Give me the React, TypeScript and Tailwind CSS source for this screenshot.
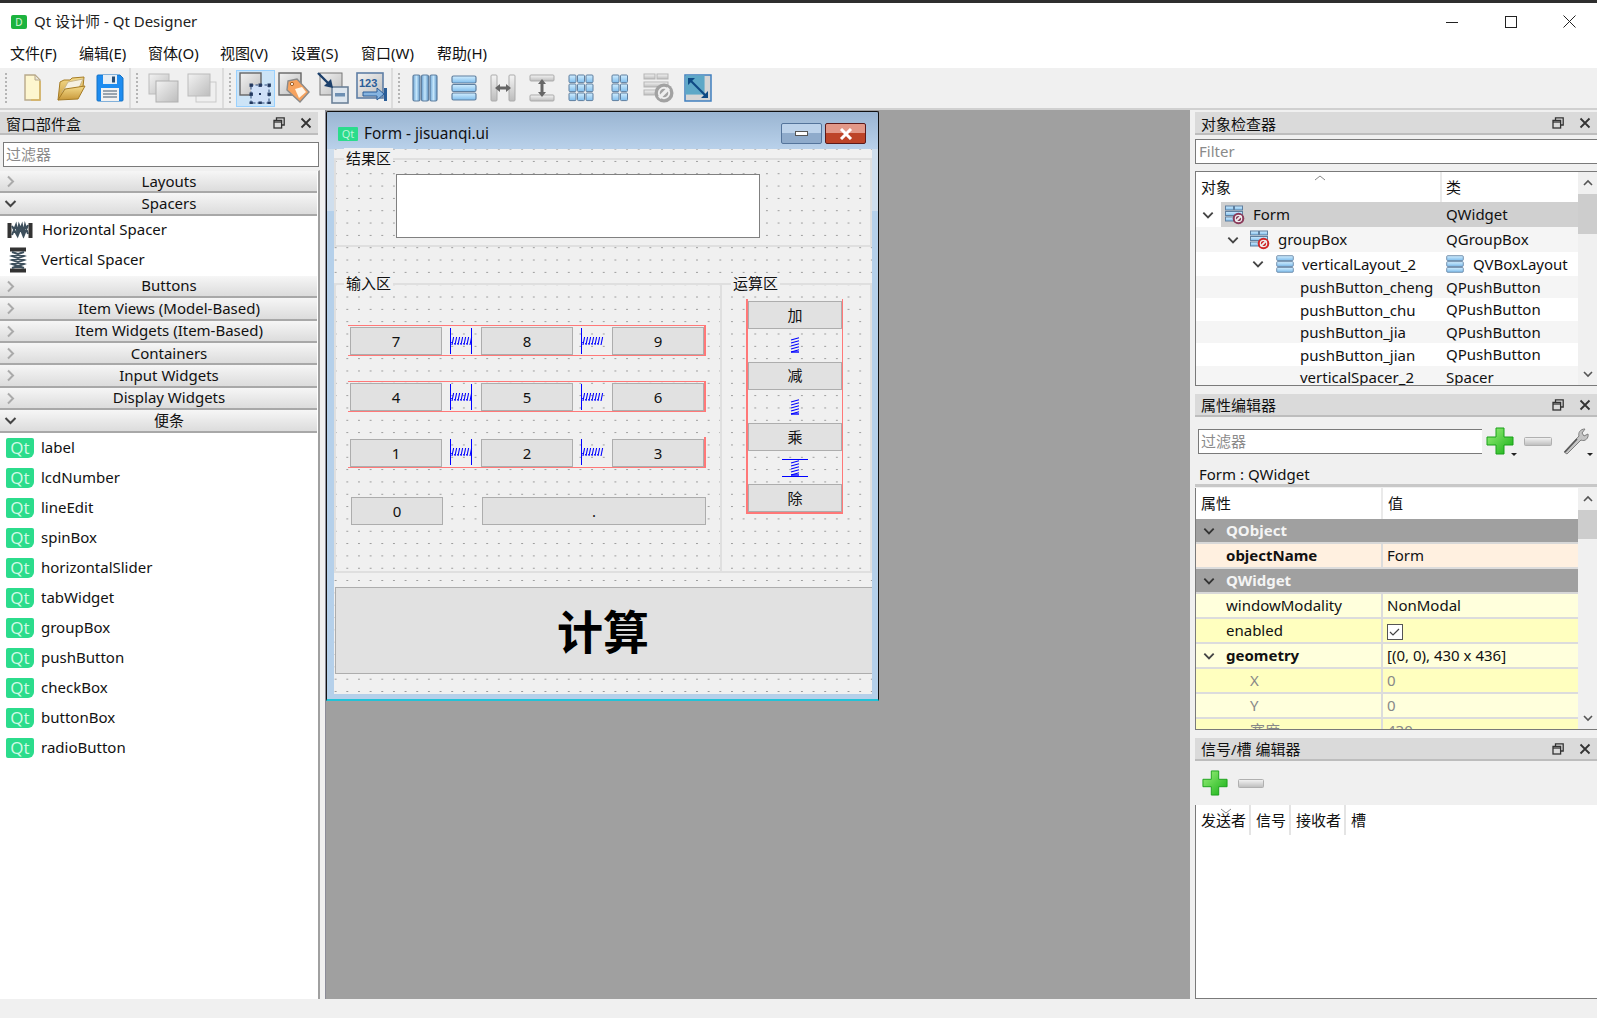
import React from "react";

const FONT = "font-['Noto_Sans','Noto_Sans_CJK_SC',sans-serif]";

function Defs() {
  return (
    <svg className="absolute w-0 h-0">
      <defs>
        <linearGradient id="gbox" x1="0" y1="0" x2="1" y2="1">
          <stop offset="0" stopColor="#f2f2f2" />
          <stop offset="1" stopColor="#bdbdbd" />
        </linearGradient>
        <linearGradient id="blueV" x1="0" y1="0" x2="1" y2="0">
          <stop offset="0" stopColor="#6fa6d6" />
          <stop offset="0.5" stopColor="#c4e6fb" />
          <stop offset="1" stopColor="#5f96c8" />
        </linearGradient>
        <linearGradient id="blueH" x1="0" y1="0" x2="0" y2="1">
          <stop offset="0" stopColor="#d2eeff" />
          <stop offset="1" stopColor="#7fbdec" />
        </linearGradient>
        <linearGradient id="grayBar" x1="0" y1="0" x2="0" y2="1">
          <stop offset="0" stopColor="#f4f4f4" />
          <stop offset="1" stopColor="#bcbcbc" />
        </linearGradient>
        <linearGradient id="greenP" x1="0" y1="0" x2="1" y2="1">
          <stop offset="0" stopColor="#9cf07c" />
          <stop offset="1" stopColor="#14b014" />
        </linearGradient>
        <linearGradient id="folder" x1="0" y1="0" x2="0" y2="1">
          <stop offset="0" stopColor="#f5dc8c" />
          <stop offset="1" stopColor="#c8983a" />
        </linearGradient>
      </defs>
    </svg>
  );
}

function Chevron({ open, color = "#444", size = 14, className = "" }: { open?: boolean; color?: string; size?: number; className?: string }) {
  return (
    <svg width={size} height={size} viewBox="0 0 12 12" className={className} fill="none" stroke={color} strokeWidth="1.6">
      {open ? <path d="M2 4l4 4 4-4" /> : <path d="M4 2l4 4-4 4" />}
    </svg>
  );
}

function DockButtons() {
  return (
    <div className="flex items-center">
      <svg width="12" height="12" viewBox="0 0 12 12" fill="none" stroke="#333" strokeWidth="1.3" className="mr-[15px]">
        <path d="M3.5 3V.8h7.7v7.2H9" />
        <rect x="1" y="3.4" width="7.6" height="7.6" />
        <path d="M1 5h7.6" />
      </svg>
      <svg width="12" height="12" viewBox="0 0 12 12" fill="none" stroke="#333" strokeWidth="1.8" className="mr-[6px]">
        <path d="M1.5 1.5l9 9M10.5 1.5l-9 9" />
      </svg>
    </div>
  );
}

function DockTitle({ title, textClass = "mt-[3px]" }: { title: string; textClass?: string }) {
  return (
    <div className="h-[23px] shrink-0 flex items-center justify-between pl-[6px] bg-[#dadada] border-b-2 border-[#bdbdbd] text-[15px] leading-none text-[#111]">
      <span className={textClass}>{title}</span>
      <DockButtons />
    </div>
  );
}

function NewIcon() {
  return (
    <svg width="30" height="30" viewBox="0 0 30 30">
      <path d="M8 2h10l5 5v20H8z" fill="#fdf6cf" stroke="#b8a98a" strokeWidth="1.4" />
      <path d="M18 2v5h5z" fill="#e8e4d8" stroke="#b8a98a" />
      <path d="M23 8v19H14" fill="none" stroke="#d9b45f" strokeWidth="1.4" />
    </svg>
  );
}

function OpenIcon() {
  return (
    <svg width="32" height="30" viewBox="0 0 32 30">
      <path d="M3 27L5 9l4-2h6l2-2 12-1-1 10z" fill="url(#folder)" stroke="#a67c25" />
      <path d="M7 20L13 9l15-3-5 11z" fill="#f6f1e2" stroke="#c9b78a" />
      <path d="M3 27l7-11 20-3-7 13z" fill="url(#folder)" stroke="#a67c25" />
    </svg>
  );
}

function SaveIcon() {
  return (
    <svg width="30" height="30" viewBox="0 0 30 30">
      <path d="M2 3a1 1 0 0 1 1-1h22l3 3v22a1 1 0 0 1-1 1H3a1 1 0 0 1-1-1z" fill="#1d8cf0" stroke="#1672c4" />
      <rect x="8" y="2" width="14" height="9" fill="#e6eef5" />
      <rect x="17" y="3.5" width="3" height="6" fill="#2b4e73" />
      <rect x="6" y="15" width="18" height="13" fill="#f2f2f2" />
      <path d="M8 18h14M8 21h14M8 24h14" stroke="#7c8b99" strokeWidth="1.3" />
    </svg>
  );
}

function CopyIcon({ flip }: { flip?: boolean }) {
  return (
    <svg width="32" height="32" viewBox="0 0 32 32">
      {flip ? (
        <>
          <rect x="10" y="10" width="20" height="20" fill="#efefef" stroke="#c9c9c9" />
          <rect x="2" y="2" width="22" height="22" fill="url(#gbox)" stroke="#bcbcbc" />
        </>
      ) : (
        <>
          <rect x="2" y="2" width="20" height="20" fill="url(#gbox)" stroke="#bcbcbc" />
          <rect x="9" y="9" width="22" height="21" fill="url(#gbox)" stroke="#b0b0b0" />
        </>
      )}
    </svg>
  );
}

function WidgetEditIcon() {
  return (
    <svg width="32" height="32" viewBox="0 0 32 32">
      <rect x="1" y="1" width="21" height="22" fill="url(#gbox)" stroke="#666" strokeWidth="1.4" />
      <rect x="12" y="13" width="18" height="18" fill="#cfe0f8" stroke="#2d4a7a" strokeDasharray="2.5 2" />
      {[[12, 13], [21, 13], [30, 13], [12, 22], [30, 22], [12, 31], [21, 31], [30, 31]].map(([x, y]) => (
        <rect key={`${x}-${y}`} x={x - 1.5} y={y - 1.5} width="3.4" height="3.4" fill="#22385f" />
      ))}
      <rect x="20" y="21" width="2" height="2" fill="#22385f" />
    </svg>
  );
}

function TagIcon() {
  return (
    <svg width="32" height="32" viewBox="0 0 32 32">
      <rect x="1" y="1" width="22" height="22" fill="url(#gbox)" stroke="#666" strokeWidth="1.4" />
      <path d="M10 9l9-2 12 13-9 10L9 18z" fill="#f6a25e" stroke="#8a8a8a" strokeWidth="1.4" />
      <path d="M17 17l7-2 4 5-7 6z" fill="#fff4e6" />
      <circle cx="14" cy="12" r="1.6" fill="#fff" stroke="#a05a20" />
    </svg>
  );
}

function BuddyIcon() {
  return (
    <svg width="32" height="32" viewBox="0 0 32 32">
      <rect x="3" y="1" width="22" height="22" fill="url(#gbox)" stroke="#777" />
      <rect x="15" y="15" width="16" height="16" fill="#dde6ef" stroke="#6d8299" strokeWidth="1.6" />
      <rect x="18" y="21" width="10" height="3.5" fill="#6d8fb3" />
      <path d="M1 1l12 12" stroke="#1b3f6b" strokeWidth="2.4" />
      <path d="M16 16l-9-2 7-7z" fill="#1b3f6b" />
    </svg>
  );
}

function TabOrderIcon() {
  return (
    <svg width="32" height="32" viewBox="0 0 32 32">
      <rect x="1" y="1" width="26" height="25" fill="url(#gbox)" stroke="#5f7fa6" strokeWidth="1.6" />
      <text x="3" y="15" fontSize="11" fill="#2a5d98" fontFamily="Liberation Sans" fontWeight="700">123</text>
      <path d="M7 20h14v-4l7 6-7 6v-4H7z" fill="#86b4e0" stroke="#2a5d98" />
      <rect x="28" y="16" width="3" height="13" fill="#2a5d98" />
    </svg>
  );
}

function HLayoutIcon() {
  return (
    <svg width="26" height="28" viewBox="0 0 26 28">
      {[1, 9.5, 18].map((x) => (
        <rect key={x} x={x} y="1" width="7" height="26" rx="1.5" fill="url(#blueV)" stroke="#5f7f9f" strokeWidth="1.2" />
      ))}
    </svg>
  );
}

function VLayoutIcon({ size = 26 }: { size?: number }) {
  return (
    <svg width={size} height={size} viewBox="0 0 26 26">
      {[1, 9.5, 18].map((y) => (
        <rect key={y} x="1" y={y} width="24" height="7" rx="1.5" fill="url(#blueH)" stroke="#5f7f9f" strokeWidth="1.2" />
      ))}
    </svg>
  );
}

function HSplitIcon() {
  return (
    <svg width="26" height="28" viewBox="0 0 26 28">
      <rect x="1" y="1" width="6" height="26" rx="1" fill="url(#grayBar)" stroke="#ababab" />
      <rect x="19" y="1" width="6" height="26" rx="1" fill="url(#grayBar)" stroke="#ababab" />
      <path d="M5 14l5-4v2.5h6V10l5 4-5 4v-2.5h-6V18z" fill="#666" />
    </svg>
  );
}

function VSplitIcon() {
  return (
    <svg width="26" height="28" viewBox="0 0 26 28">
      <rect x="1" y="1" width="24" height="6" rx="1" fill="url(#grayBar)" stroke="#ababab" />
      <rect x="1" y="21" width="24" height="6" rx="1" fill="url(#grayBar)" stroke="#ababab" />
      <path d="M13 5l4 5h-2.5v8H17l-4 5-4-5h2.5v-8H9z" fill="#666" />
    </svg>
  );
}

function GridIcon({ cols, size }: { cols: number; size: number }) {
  const cells = [];
  for (let r = 0; r < 3; r++)
    for (let c = 0; c < cols; c++)
      cells.push(<rect key={`${r}-${c}`} x={1 + c * 8.5} y={1 + r * 9} width="7" height="7.6" rx="1" fill="url(#blueH)" stroke="#5f7f9f" />);
  return (
    <svg width={size} height="28" viewBox={`0 0 ${size} 28`}>
      {cells}
    </svg>
  );
}

function NoSign({ cx, cy, r, color }: { cx: number; cy: number; r: number; color: string }) {
  return (
    <g>
      <circle cx={cx} cy={cy} r={r} fill={color} />
      <path d={`M${cx - r * 0.5} ${cy + r * 0.5}L${cx + r * 0.5} ${cy - r * 0.5}`} stroke="#eee" strokeWidth={r * 0.35} />
      <circle cx={cx} cy={cy} r={r * 0.55} fill="none" stroke="#eee" strokeWidth={r * 0.2} />
    </g>
  );
}

function BreakIcon() {
  return (
    <svg width="32" height="30" viewBox="0 0 32 30">
      <rect x="1" y="1" width="11" height="5" fill="url(#grayBar)" stroke="#b5b5b5" />
      <rect x="14" y="1" width="11" height="5" fill="url(#grayBar)" stroke="#b5b5b5" />
      <rect x="1" y="9" width="24" height="5" fill="url(#grayBar)" stroke="#b5b5b5" />
      <rect x="1" y="17" width="12" height="5" fill="url(#grayBar)" stroke="#b5b5b5" />
      <NoSign cx={21} cy={20} r={9.5} color="#a2a2a2" />
    </svg>
  );
}

function AdjustIcon() {
  return (
    <svg width="28" height="28" viewBox="0 0 28 28">
      <rect x="1" y="1" width="26" height="26" fill="#d6d6d6" stroke="#3f7fbf" strokeWidth="1.5" />
      <rect x="1.5" y="1.5" width="19" height="19" fill="#6fb6cf" />
      <rect x="1.5" y="1.5" width="19" height="19" fill="#3f8fb8" opacity="0.35" />
      <path d="M5 5l17 17" stroke="#0f4a84" strokeWidth="2.2" />
      <path d="M4 4h7l-7 7zM24 24h-7l7-7z" fill="#0f4a84" />
    </svg>
  );
}

function Plus({ size }: { size: number }) {
  return (
    <svg width={size} height={size} viewBox="0 0 28 28">
      <path d="M10 1h8v9h9v8h-9v9h-8v-9H1v-8h9z" fill="url(#greenP)" stroke="#19a019" />
    </svg>
  );
}

function MinusIcon({ width }: { width: number }) {
  return (
    <svg width={width} height="9" viewBox={`0 0 ${width} 9`}>
      <rect x="0.5" y="0.5" width={width - 1} height="8" rx="1" fill="url(#grayBar)" stroke="#b0b0b0" />
    </svg>
  );
}

function Wrench() {
  return (
    <svg width="28" height="28" viewBox="0 0 28 28">
      <path d="M2 25L17 9c-1-3 1-7 6-7l-3 4 2 3 4-2c1 4-3 8-7 6L5 27z" fill="#c4c4c4" stroke="#7e7e7e" />
      <path d="M3 25L15 12" stroke="#555" strokeWidth="1.4" />
    </svg>
  );
}

function FormIcon({ sign }: { sign: string }) {
  return (
    <svg width="20" height="20" viewBox="0 0 20 20">
      <rect x="0.5" y="1" width="8" height="4" fill="url(#blueH)" stroke="#5f7f9f" />
      <rect x="9.5" y="1" width="8" height="4" fill="url(#blueH)" stroke="#5f7f9f" />
      <rect x="0.5" y="6.5" width="17" height="4" fill="url(#blueH)" stroke="#5f7f9f" />
      <rect x="0.5" y="12" width="8" height="4" fill="url(#blueH)" stroke="#5f7f9f" />
      <NoSign cx={13.5} cy={13.5} r={5.8} color={sign} />
    </svg>
  );
}

function HSpringList() {
  return (
    <svg width="26" height="20" viewBox="0 0 26 20">
      <rect x="0.5" y="3" width="4" height="15" fill="#333" />
      <rect x="21.5" y="3" width="4" height="15" fill="#333" />
      <path d="M5 15L9 5l2 10 4-10 2 10 4-10M5 6l5 9 2-10 4 10 2-10 3 9" fill="none" stroke="#3d4f5c" strokeWidth="2" />
    </svg>
  );
}

function VSpringList() {
  return (
    <svg width="18" height="26" viewBox="0 0 18 26">
      <rect x="1" y="0.5" width="16" height="4" fill="#333" />
      <rect x="1" y="21.5" width="16" height="4" fill="#333" />
      <path d="M3 5l12 4-12 4 12 4-12 4M15 5L3 9l12 4-12 4 12 4" fill="none" stroke="#3d4f5c" strokeWidth="2" />
    </svg>
  );
}

function HSpacer({ right }: { right?: boolean }) {
  return (
    <div className="w-[39px] h-[26px] self-center flex items-center justify-center">
      <svg width="23" height="26" viewBox="0 0 23 26" fill="none" stroke="#0000ff">
        <path d="M0.5 0v26" shapeRendering="crispEdges" />
        {right && <path d="M21.5 0v26" shapeRendering="crispEdges" />}
        {[2, 5, 8, 11, 14, 17, 20].map((x) => (
          <path key={x} d={`M${x} 17l1.6-8`} strokeWidth="1.1" />
        ))}
        <path d="M1 15l1-1M4 16l1-1M7 16l1-1M10 16l1-1M13 16l1-1M16 16l1-1" strokeWidth="0.8" />
      </svg>
    </div>
  );
}

function VSpacer({ lines }: { lines?: boolean }) {
  return (
    <svg width="26" height="18" viewBox="0 0 26 18" fill="none" stroke="#0000ff">
      {lines && <path d="M0 0.5h26M0 17.5h26" shapeRendering="crispEdges" />}
      {[4, 7, 10, 13, 16].map((y) => (
        <path key={y} d={`M9 ${y}l8-2.2`} strokeWidth="1.1" />
      ))}
      <path d="M9 16h8" strokeWidth="1.4" />
    </svg>
  );
}

function QtIcon() {
  return (
    <div className="w-[28px] h-[20px] bg-[#2bdc8c] rounded-[2px] rounded-br-[6px] flex items-center justify-center text-[17px] leading-none text-[#d2fae6] font-medium font-['Open_Sans',sans-serif]">
      Qt
    </div>
  );
}

function ToolCell({ children, selected }: { children: React.ReactNode; selected?: boolean }) {
  return (
    <div className={selected ? "w-[39px] h-[37px] flex items-center justify-center bg-[#cce4f7] border border-[#99d1ff]" : "w-[39px] h-[37px] flex items-center justify-center"}>
      {children}
    </div>
  );
}

function Grip() {
  return <div className="ml-[5px] mr-[5px] w-[2px] h-[30px] bg-[linear-gradient(#b5b5b5_50%,transparent_50%)] bg-size-[2px_4px]" />;
}

function Toolbar() {
  return (
    <div className="h-[42px] shrink-0 bg-[#f0f0f0] border-b-2 border-[#d0d0d0] flex items-center">
      <div className="w-[131px] h-full flex items-center border-r-2 border-[#dcdcdc]">
        <Grip />
        <ToolCell><NewIcon /></ToolCell>
        <ToolCell><OpenIcon /></ToolCell>
        <ToolCell><SaveIcon /></ToolCell>
      </div>
      <div className="w-[93px] h-full flex items-center border-r-2 border-[#dcdcdc]">
        <Grip />
        <ToolCell><CopyIcon /></ToolCell>
        <ToolCell><CopyIcon flip /></ToolCell>
      </div>
      <div className="w-[169px] h-full flex items-center border-r-2 border-[#dcdcdc]">
        <Grip />
        <ToolCell selected><WidgetEditIcon /></ToolCell>
        <ToolCell><TagIcon /></ToolCell>
        <ToolCell><BuddyIcon /></ToolCell>
        <ToolCell><TabOrderIcon /></ToolCell>
      </div>
      <div className="flex items-center h-full">
        <Grip />
        <ToolCell><HLayoutIcon /></ToolCell>
        <ToolCell><VLayoutIcon /></ToolCell>
        <ToolCell><HSplitIcon /></ToolCell>
        <ToolCell><VSplitIcon /></ToolCell>
        <ToolCell><GridIcon cols={3} size={26} /></ToolCell>
        <ToolCell><GridIcon cols={2} size={18} /></ToolCell>
        <ToolCell><BreakIcon /></ToolCell>
        <ToolCell><AdjustIcon /></ToolCell>
      </div>
    </div>
  );
}

function Section({ label, open }: { label: string; open?: boolean }) {
  return (
    <div className="h-[22.4px] shrink-0 relative flex items-center justify-center pl-[21px] border-b-2 border-[#a8a8a8] bg-[linear-gradient(#f6f6f6,#dcdcdc)] text-[15px] leading-none text-[#111] mr-[1px]">
      <Chevron open={open} color={open ? "#444" : "#aaa"} size={15} className="absolute left-[3px] top-[3px]" />
      <span>{label}</span>
    </div>
  );
}

const QT_ITEMS = ["label", "lcdNumber", "lineEdit", "spinBox", "horizontalSlider", "tabWidget", "groupBox", "pushButton", "checkBox", "buttonBox", "radioButton"];

function WidgetBox() {
  return (
    <div className="w-[320px] shrink-0 flex flex-col pt-[2px]">
      <div className="border-r-2 border-[#f0f0f0]">
        <DockTitle title="窗口部件盒" />
      </div>
      <div className="mt-[7px] ml-[3px] mr-[1px] h-[25px] border border-[#7a7a7a] bg-white flex items-center pl-[2px] text-[15px] leading-none text-[#8a8a8a] shrink-0">
        过滤器
      </div>
      <div className="mt-[3px] flex-1 flex flex-col bg-white border-r-2 border-t border-[#a0a0a0] border-t-[#f0f0f0] overflow-hidden">
        <Section label="Layouts" />
        <Section label="Spacers" open />
        <div className="h-[60px] shrink-0 flex flex-col text-[15px] leading-none text-[#111]">
          <div className="h-[28px] flex items-center pl-[7px]">
            <HSpringList />
            <span className="ml-[9px]">Horizontal Spacer</span>
          </div>
          <div className="h-[32px] flex items-center pl-[9px]">
            <VSpringList />
            <span className="ml-[14px]">Vertical Spacer</span>
          </div>
        </div>
        <Section label="Buttons" />
        <Section label="Item Views (Model-Based)" />
        <Section label="Item Widgets (Item-Based)" />
        <Section label="Containers" />
        <Section label="Input Widgets" />
        <Section label="Display Widgets" />
        <Section label="便条" open />
        {QT_ITEMS.map((name) => (
          <div key={name} className="h-[30px] shrink-0 flex items-center pl-[6px] text-[15px] leading-none text-[#111]">
            <QtIcon />
            <span className="ml-[7px]">{name}</span>
          </div>
        ))}
      </div>
    </div>
  );
}

function FormButton({ label, className }: { label: string; className: string }) {
  return (
    <div className={`${className} h-[28px] shrink-0 flex items-center justify-center bg-[#e1e1e1] border border-[#adadad] text-[15px] leading-none text-[#111]`}>
      {label}
    </div>
  );
}

function KeyRow({ keys, className }: { keys: string[]; className: string }) {
  return (
    <div className={`${className} w-[358px] h-[31px] flex items-end pl-[2px] border-r-2 border-b border-[#ff7878]`}>
      <FormButton label={keys[0]} className="w-[92px]" />
      <HSpacer right />
      <FormButton label={keys[1]} className="w-[92px]" />
      <HSpacer />
      <FormButton label={keys[2]} className="w-[92px]" />
    </div>
  );
}

function GroupLabel({ text, className }: { text: string; className: string }) {
  return <span className={`${className} absolute top-[-12px] px-[2px] bg-[#f0f0f0] text-[15px] leading-[20px] text-[#111]`}>{text}</span>;
}

function FormWindow() {
  return (
    <div className="absolute left-0 top-[1px] w-[553px] h-[590px] flex flex-col border-x border-t border-[#111] border-b-2 border-b-[#22c3d8] rounded-t-[2px] bg-[linear-gradient(#9ab5d2_0px,#b9d1ea_37px,#cfdeed_37px,#cfdeed_99px,#b5d0ea_99px)]">
      <div className="h-[37px] shrink-0 flex items-center pl-[11px] pr-[12px]">
        <div className="w-[20px] h-[14px] bg-[#2bdc8c] rounded-[1px] flex items-center justify-center text-[11px] leading-none text-[#bff5da] mt-[6px]">Qt</div>
        <span className="ml-[6px] mt-[7px] text-[15.4px] leading-none text-[#111] flex-1">Form - jisuanqi.ui</span>
        <div className="w-[41px] h-[21px] mt-[6px] rounded-[2px] border border-[#54749b] bg-[linear-gradient(#bcd2ea_50%,#8fabcb_50%)] flex items-center justify-center">
          <div className="w-[13px] h-[5px] bg-white border border-[#555]" />
        </div>
        <div className="w-[41px] h-[21px] mt-[6px] ml-[3px] rounded-[2px] border border-[#5c1a1a] bg-[linear-gradient(#e29888_50%,#bd4428_50%)] flex items-center justify-center">
          <svg width="14" height="12" viewBox="0 0 14 12" fill="none" stroke="#fff" strokeWidth="3">
            <path d="M2 1l10 10M12 1L2 11" />
          </svg>
        </div>
      </div>
      <div className="ml-[7px] w-[538px] h-[545px] shrink-0 bg-[#f0f0f0] flex flex-col pt-[9px] bg-[radial-gradient(circle,#999_0.6px,transparent_0.8px)] bg-size-[11.67px_12.33px] bg-position-[-4.2px_-6.1px]">
        <div className="relative h-[89px] shrink-0 border-2 border-[#dfdfdf] pl-[60px] pt-[14px]">
          <GroupLabel text="结果区" className="left-[8px]" />
          <div className="w-[364px] h-[64px] bg-white border border-[#808080]" />
        </div>
        <div className="mt-[36px] h-[290px] shrink-0 flex">
          <div className="relative w-[388px] shrink-0 border-2 border-[#dfdfdf] pl-[12px] pt-[40px]">
            <GroupLabel text="输入区" className="left-[8px]" />
            <KeyRow keys={["7", "8", "9"]} className="border-t" />
            <KeyRow keys={["4", "5", "6"]} className="mt-[25px] border-t" />
            <KeyRow keys={["1", "2", "3"]} className="mt-[25px]" />
            <div className="mt-[29px] pl-[3px] flex">
              <FormButton label="0" className="w-[92px]" />
              <FormButton label="." className="ml-[39px] w-[224px]" />
            </div>
          </div>
          <div className="relative flex-1 border-2 border-l-0 border-[#dfdfdf] pl-[24px] pt-[14px]">
            <GroupLabel text="运算区" className="left-[9px]" />
            <div className="w-[97px] h-[215px] border-l-2 border-r border-b-2 border-[#ff7878] flex flex-col items-center pt-[2px]">
              <FormButton label="加" className="w-[94px]" />
              <div className="h-[33px] flex items-center"><VSpacer /></div>
              <FormButton label="减" className="w-[94px]" />
              <div className="h-[34px] flex items-center"><VSpacer /></div>
              <FormButton label="乘" className="w-[94px]" />
              <div className="h-[33px] flex items-center"><VSpacer lines /></div>
              <FormButton label="除" className="w-[94px]" />
            </div>
          </div>
        </div>
        <div className="mt-[14px] ml-[1px] pr-[2px] h-[87px] shrink-0 bg-[#e1e1e1] border border-[#adadad] border-r-0 flex items-center justify-center text-[46px] leading-none font-bold text-black">
          计算
        </div>
      </div>
    </div>
  );
}

function ScrollBar({ thumbClass }: { thumbClass: string }) {
  return (
    <div className="w-[19px] shrink-0 bg-[#f0f0f0] flex flex-col items-center justify-between">
      <div className="w-full flex flex-col items-center">
        <div className="h-[22px] flex items-center"><svg width="12" height="8" viewBox="0 0 12 8" fill="none" stroke="#555" strokeWidth="1.6"><path d="M2 6l4-4 4 4" /></svg></div>
        <div className={`w-full bg-[#cdcdcd] ${thumbClass}`} />
      </div>
      <div className="h-[22px] flex items-center"><svg width="12" height="8" viewBox="0 0 12 8" fill="none" stroke="#555" strokeWidth="1.6"><path d="M2 2l4 4 4-4" /></svg></div>
    </div>
  );
}

function ObjRow({ h, bg, pad, name, cls, icon }: { h: string; bg: string; pad: string; name: string; cls: React.ReactNode; icon?: React.ReactNode }) {
  return (
    <div className={`${h} ${bg} shrink-0 flex items-center text-[15px] leading-none text-[#111]`}>
      <div className={`w-[246px] shrink-0 flex items-center ${pad}`}>
        {icon}
        <span>{name}</span>
      </div>
      <div className="pl-[4px] flex items-center">{cls}</div>
    </div>
  );
}

function ObjectInspector() {
  return (
    <div className="h-[274px] shrink-0 flex flex-col">
      <DockTitle title="对象检查器" />
      <div className="mt-[4px] h-[25px] shrink-0 bg-white border border-[#7a7a7a] border-r-0 flex items-center pl-[3px] text-[15px] leading-none text-[#8a8a8a]">Filter</div>
      <div className="mt-[7px] flex-1 min-h-0 flex border border-[#7a7a7a] border-r-0 bg-white overflow-hidden">
        <div className="flex-1 min-w-0 flex flex-col">
          <div className="h-[30px] shrink-0 flex items-center relative text-[15px] leading-none text-[#111]">
            <svg width="12" height="6" viewBox="0 0 12 6" fill="none" stroke="#888" className="absolute left-[118px] top-[3px]"><path d="M1 5l5-4 5 4" /></svg>
            <div className="w-[246px] h-full flex items-center pl-[5px] border-r-2 border-[#eaeaea]">对象</div>
            <div className="pl-[4px]">类</div>
          </div>
          <div className="h-[25px] shrink-0 flex text-[15px] leading-none text-[#111]">
            <div className="w-[25px] flex items-center pl-[5px]"><Chevron open /></div>
            <div className="flex-1 flex items-center bg-[#d0d0d0]">
              <div className="w-[221px] flex items-center pl-[4px]">
                <FormIcon sign="#8a3a5a" />
                <span className="ml-[8px]">Form</span>
              </div>
              <div className="pl-[4px]">QWidget</div>
            </div>
          </div>
          <ObjRow h="h-[25px]" bg="bg-[#f5f5f5]" pad="pl-[30px]" name="groupBox" cls="QGroupBox" icon={<><Chevron open className="mr-[10px]" /><FormIcon sign="#d02828" /><span className="w-[8px]" /></>} />
          <ObjRow h="h-[24px]" bg="bg-white" pad="pl-[55px]" name="verticalLayout_2" cls={<><VLayoutIcon size={18} /><span className="ml-[9px]">QVBoxLayout</span></>} icon={<><Chevron open className="mr-[11px]" /><VLayoutIcon size={18} /><span className="w-[8px]" /></>} />
          <ObjRow h="h-[22px]" bg="bg-[#f5f5f5]" pad="pl-[104px]" name="pushButton_cheng" cls="QPushButton" />
          <ObjRow h="h-[23px]" bg="bg-white" pad="pl-[104px] pt-[1px]" name="pushButton_chu" cls="QPushButton" />
          <ObjRow h="h-[22px]" bg="bg-[#f5f5f5]" pad="pl-[104px]" name="pushButton_jia" cls="QPushButton" />
          <ObjRow h="h-[23px]" bg="bg-white" pad="pl-[104px] pt-[1px]" name="pushButton_jian" cls="QPushButton" />
          <ObjRow h="h-[22px]" bg="bg-[#f5f5f5]" pad="pl-[104px]" name="verticalSpacer_2" cls="Spacer" />
        </div>
        <ScrollBar thumbClass="h-[40px]" />
      </div>
    </div>
  );
}

function GroupRow({ label }: { label: string }) {
  return (
    <div className="h-[25px] shrink-0 flex items-center bg-[#a0a0a0] border-b-2 border-[#d8d8d8] pl-[6px] text-[15px] leading-none font-bold text-[#f4f4f4]">
      <Chevron open color="#333" />
      <span className="ml-[10px]">{label}</span>
    </div>
  );
}

function PropRow({ bg, name, value, bold, chevron, sub }: { bg: string; name: string; value: React.ReactNode; bold?: boolean; chevron?: boolean; sub?: boolean }) {
  return (
    <div className={`${bg} h-[25px] shrink-0 flex items-center border-b-2 border-[#dcdcdc] text-[15px] leading-none`}>
      <div className="w-[187px] shrink-0 h-full flex items-center border-r-2 border-[#dcdcdc] pl-[6px]">
        <span className="w-[14px] h-[14px]">{chevron && <Chevron open />}</span>
        <span className={sub ? "ml-[34px] text-[#888]" : bold ? "ml-[10px] font-bold text-[#111]" : "ml-[10px] text-[#111]"}>{name}</span>
      </div>
      <div className={sub ? "pl-[4px] text-[#888]" : "pl-[4px] text-[#111]"}>{value}</div>
    </div>
  );
}

function PropertyEditor() {
  return (
    <div className="mt-[8px] h-[336px] shrink-0 flex flex-col">
      <DockTitle title="属性编辑器" textClass="mt-[2px]" />
      <div className="h-[47px] shrink-0 flex items-center pl-[3px] pt-[1px]">
        <div className="w-[284px] h-[25px] bg-white border border-[#7a7a7a] border-r-0 flex items-center pl-[2px] text-[15px] leading-none text-[#8a8a8a]">过滤器</div>
        <div className="ml-[4px] relative w-[32px]">
          <Plus size={28} />
          <div className="absolute right-[1px] bottom-[-1px] w-0 h-0 border-x-[3px] border-t-[3px] border-x-transparent border-t-[#222]" />
        </div>
        <div className="ml-[6px]"><MinusIcon width={28} /></div>
        <div className="ml-[10px] relative w-[32px]">
          <Wrench />
          <div className="absolute right-[1px] bottom-[-1px] w-0 h-0 border-x-[3px] border-t-[3px] border-x-transparent border-t-[#222]" />
        </div>
      </div>
      <div className="h-[23px] shrink-0 flex items-center pl-[4px] border-b-[3px] border-[#c8c8c8] text-[15px] leading-none text-[#111]">Form : QWidget</div>
      <div className="mt-[1px] flex-1 min-h-0 flex border-b border-l border-[#7a7a7a] bg-white overflow-hidden">
        <div className="flex-1 min-w-0 flex flex-col">
          <div className="h-[31px] shrink-0 flex items-center text-[15px] leading-none text-[#111]">
            <div className="w-[187px] h-full flex items-center pl-[5px] border-r-2 border-[#eaeaea]">属性</div>
            <div className="pl-[5px]">值</div>
          </div>
          <GroupRow label="QObject" />
          <PropRow bg="bg-[#fff0e0]" name="objectName" value="Form" bold />
          <GroupRow label="QWidget" />
          <PropRow bg="bg-[#ffffdc]" name="windowModality" value="NonModal" />
          <PropRow
            bg="bg-[#ffffbf]"
            name="enabled"
            value={
              <svg width="16" height="16" viewBox="0 0 16 16" className="mt-[2px]">
                <rect x="0.5" y="0.5" width="15" height="15" fill="#fff" stroke="#555" />
                <path d="M3 8l3 3 6-6" fill="none" stroke="#444" strokeWidth="1.2" />
              </svg>
            }
          />
          <PropRow bg="bg-[#ffffdc]" name="geometry" value="[(0, 0), 430 x 436]" bold chevron />
          <PropRow bg="bg-[#ffffbf]" name="X" value="0" sub />
          <PropRow bg="bg-[#ffffdc]" name="Y" value="0" sub />
          <PropRow bg="bg-[#ffffbf]" name="宽度" value="430" sub />
        </div>
        <ScrollBar thumbClass="h-[29px]" />
      </div>
    </div>
  );
}

function SignalHeader({ label, className }: { label: string; className: string }) {
  return <div className={`${className} h-[30px] flex items-center pl-[5px] border-r-2 border-[#e4e4e4]`}>{label}</div>;
}

function SignalEditor() {
  return (
    <div className="mt-[8px] flex-1 min-h-0 flex flex-col">
      <DockTitle title="信号/槽 编辑器" textClass="mt-[1px]" />
      <div className="h-[44px] shrink-0 flex items-center pl-[7px]">
        <Plus size={26} />
        <div className="ml-[10px]"><MinusIcon width={26} /></div>
      </div>
      <div className="flex-1 bg-white border-l border-b border-[#7a7a7a] relative">
        <svg width="12" height="6" viewBox="0 0 12 6" fill="none" stroke="#888" className="absolute left-[24px] top-[3px]"><path d="M1 1l5 4 5-4" /></svg>
        <div className="flex text-[15px] leading-none text-[#111]">
          <SignalHeader label="发送者" className="w-[55px]" />
          <SignalHeader label="信号" className="w-[40px]" />
          <SignalHeader label="接收者" className="w-[55px]" />
          <div className="h-[30px] flex items-center pl-[5px]">槽</div>
        </div>
      </div>
    </div>
  );
}

export default function App() {
  return (
    <div className={`w-[1597px] h-[1018px] flex flex-col bg-[#f0f0f0] overflow-hidden ${FONT}`}>
      <Defs />
      <div className="h-[3px] shrink-0 bg-[#2e2e2e]" />
      <div className="h-[37px] shrink-0 bg-white flex items-center">
        <div className="ml-[11px] w-[16px] h-[14px] rounded-[2px] bg-[#1cb33e] flex items-center justify-center text-[10px] leading-none text-[#d8f5dc]">D</div>
        <span className="ml-[7px] text-[15px] leading-none text-[#222] flex-1">Qt 设计师 - Qt Designer</span>
        <div className="w-[59px] h-[37px] flex items-center justify-center">
          <svg width="12" height="12" viewBox="0 0 12 12" stroke="#222"><path d="M0 6.5h12" /></svg>
        </div>
        <div className="w-[60px] h-[37px] flex items-center justify-center">
          <svg width="12" height="12" viewBox="0 0 12 12" stroke="#222" fill="none"><rect x="0.5" y="0.5" width="11" height="11" /></svg>
        </div>
        <div className="w-[56px] h-[37px] flex items-center justify-center">
          <svg width="13" height="13" viewBox="0 0 13 13" stroke="#222" fill="none"><path d="M0.5 0.5l12 12M12.5 0.5l-12 12" /></svg>
        </div>
      </div>
      <div className="h-[28px] shrink-0 bg-white flex items-center pl-[10px] pb-[2px] text-[15px] leading-none text-[#111]">
        <span className="w-[69px]">文件(F)</span>
        <span className="w-[69px]">编辑(E)</span>
        <span className="w-[72px]">窗体(O)</span>
        <span className="w-[71px]">视图(V)</span>
        <span className="w-[70px]">设置(S)</span>
        <span className="w-[76px]">窗口(W)</span>
        <span>帮助(H)</span>
      </div>
      <Toolbar />
      <div className="flex-1 min-h-0 flex">
        <WidgetBox />
        <div className="w-[5px] shrink-0" />
        <div className="w-[865px] shrink-0 bg-[#a0a0a0] border-l border-[#8c8c98] relative">
          <FormWindow />
        </div>
        <div className="w-[5px] shrink-0" />
        <div className="flex-1 min-w-0 flex flex-col pt-[2px]">
          <ObjectInspector />
          <PropertyEditor />
          <SignalEditor />
        </div>
      </div>
      <div className="h-[19px] shrink-0" />
    </div>
  );
}
